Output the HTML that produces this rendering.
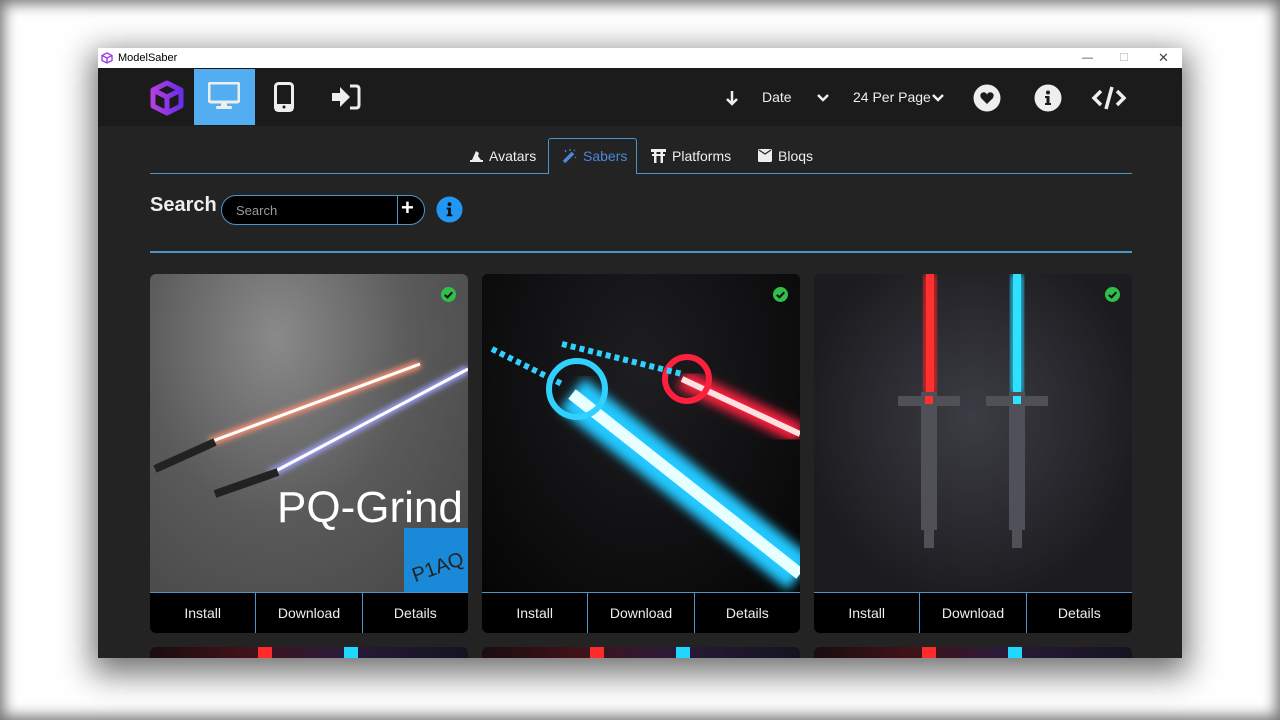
<!DOCTYPE html>
<html><head><meta charset="utf-8"><style>
*{box-sizing:border-box;margin:0;padding:0}
html,body{width:1280px;height:720px;overflow:hidden;background:#fff;font-family:"Liberation Sans",sans-serif}
body{position:relative;box-shadow:inset 0 0 14px 4px rgba(0,0,0,.55)}
.win{position:absolute;left:98px;top:48px;width:1084px;height:610px;background:#232323;overflow:hidden;box-shadow:0 10px 30px 6px rgba(0,0,0,.55)}
.title{height:20px;background:#fff;position:relative;font-size:11px;color:#000;line-height:20px;padding-left:20px}
.title svg{position:absolute;left:3px;top:4px}
.ctl{position:absolute;top:0;font-size:11px;color:#444}
.nav{height:58px;background:#1b1b1b;position:relative}
.nav .act{position:absolute;left:96px;top:1px;width:61px;height:56px;background:#52aef0}
.n{position:absolute;color:#eee;font-size:14px}
.tabs{position:absolute;left:52px;top:105px;width:982px;height:1px;background:#4a95c9}
.tab{position:absolute;top:88px;font-size:14px;color:#eee}
.sab{position:absolute;left:450px;top:90px;width:89px;height:36px;border:1px solid #4a95c9;border-bottom:none;background:#232323;border-radius:3px 3px 0 0}
.card{position:absolute;top:226px;width:318px;height:359px;background:#000;border-radius:6px;overflow:hidden}
.img{position:absolute;left:0;top:0;width:318px;height:318px}
.bar{position:absolute;top:318px;left:0;width:318px;height:41px;border-top:1px solid #4a95c9;display:flex}
.bar div{flex:1;text-align:center;line-height:40px;color:#eee;font-size:14px;border-left:1px solid #4a95c9}
.bar div:first-child{border-left:none}
.chk{position:absolute;right:12px;top:13px;width:15px;height:15px}
.card2{position:absolute;top:599px;width:318px;height:30px;border-radius:6px;overflow:hidden;background:linear-gradient(90deg,#1a0d10 0%,#401218 30%,#2a1a3a 60%,#141420 100%)}
</style></head><body>
<div class="win">
 <div class="title"><svg width="12" height="12" viewBox="0 0 12 12"><path d="M6 1L11 3.5V8.5L6 11L1 8.5V3.5Z M1 3.5L6 6L11 3.5 M6 6V11" fill="none" stroke="#9b3bea" stroke-width="1.4"/></svg>ModelSaber
  <span class="ctl" style="left:984px">—</span><span class="ctl" style="left:1021px;color:#bbb">☐</span><span class="ctl" style="left:1060px;font-size:13px">✕</span></div>
 <div class="nav">
  <svg style="position:absolute;left:52px;top:12px" width="34" height="36" viewBox="0 0 34 36"><defs><linearGradient id="g" x1="0" x2="1"><stop offset="0" stop-color="#b43ee0"/><stop offset="1" stop-color="#6a2ee8"/></linearGradient></defs><path d="M17 3L31 10V26L17 33L3 26V10Z M3 10L17 17L31 10 M17 17V33" fill="none" stroke="url(#g)" stroke-width="5" stroke-linejoin="round"/></svg>
  <div class="act"></div>
  <svg style="position:absolute;left:110px;top:14px" width="32" height="28" viewBox="0 0 32 28"><rect x="1" y="1" width="30" height="19" rx="2" fill="none" stroke="#eee" stroke-width="3"/><rect x="13" y="20" width="6" height="5" fill="#eee"/><rect x="8" y="24" width="16" height="3" rx="1" fill="#eee"/></svg>
  <svg style="position:absolute;left:176px;top:14px" width="20" height="30" viewBox="0 0 20 30"><rect x="1.5" y="1.5" width="17" height="27" rx="3" fill="none" stroke="#eee" stroke-width="3"/><rect x="1" y="22" width="18" height="7" fill="#eee"/><circle cx="10" cy="25" r="1.5" fill="#1b1b1b"/></svg>
  <svg style="position:absolute;left:233px;top:16px" width="30" height="26" viewBox="0 0 30 26"><path d="M1 9H9V3L19 13L9 23V17H1Z" fill="#eee"/><path d="M19 2H25Q28 2 28 5V21Q28 24 25 24H19" fill="none" stroke="#eee" stroke-width="3"/></svg>
  <svg style="position:absolute;left:627px;top:22px" width="14" height="16" viewBox="0 0 14 16"><path d="M7 1V14M2 9L7 14L12 9" fill="none" stroke="#eee" stroke-width="2.5"/></svg>
  <span class="n" style="left:664px;top:21px">Date</span>
  <svg style="position:absolute;left:719px;top:25px" width="12" height="9" viewBox="0 0 12 9"><path d="M1 2L6 7L11 2" fill="none" stroke="#eee" stroke-width="2.5"/></svg>
  <span class="n" style="left:755px;top:21px">24 Per Page</span>
  <svg style="position:absolute;left:834px;top:25px" width="12" height="9" viewBox="0 0 12 9"><path d="M1 2L6 7L11 2" fill="none" stroke="#eee" stroke-width="2.5"/></svg>
  <svg style="position:absolute;left:875px;top:16px" width="28" height="28" viewBox="0 0 28 28"><circle cx="14" cy="14" r="13.5" fill="#eee"/><path d="M14 20L8 14Q6 10 9.5 8.5Q12.5 7.5 14 10.5Q15.5 7.5 18.5 8.5Q22 10 20 14Z" fill="#1b1b1b"/></svg>
  <svg style="position:absolute;left:936px;top:16px" width="28" height="28" viewBox="0 0 28 28"><circle cx="14" cy="14" r="13.5" fill="#eee"/><circle cx="14" cy="8.5" r="2" fill="#1b1b1b"/><path d="M11 12H15.5V19H17V21H11V19H12.5V14H11Z" fill="#1b1b1b"/></svg>
  <svg style="position:absolute;left:993px;top:17px" width="36" height="26" viewBox="0 0 36 26"><path d="M10 6L3 13L10 20M26 6L33 13L26 20M21 2L15 24" fill="none" stroke="#eee" stroke-width="3.5"/></svg>
 </div>
 <div class="sab"></div>
 <div class="tabs" style="top:125px"></div>
 <div style="position:absolute;left:451px;top:125px;width:87px;height:2px;background:#232323"></div>
 <svg style="position:absolute;left:372px;top:101px" width="13" height="13" viewBox="0 0 13 13"><path d="M2 11L6 2L9 4L8 7L11 11Z" fill="#eee"/><rect x="0" y="11" width="13" height="2" fill="#eee"/></svg>
 <span class="tab" style="left:391px;top:100px">Avatars</span>
 <svg style="position:absolute;left:464px;top:101px" width="15" height="14" viewBox="0 0 15 14"><path d="M2 13L11 4" stroke="#4a88d8" stroke-width="3.5"/><path d="M3 1L4 3M12 1L13 2M13 8L14 9M8 0V2" stroke="#4a88d8" stroke-width="1.2"/></svg>
 <span class="tab" style="left:485px;top:100px;color:#4a88d8">Sabers</span>
 <svg style="position:absolute;left:553px;top:101px" width="15" height="14" viewBox="0 0 15 14"><path d="M0 0H15V3H0Z M1 5H14V7H1Z M3 3H5.5V14H3Z M9.5 3H12V14H9.5Z" fill="#eee"/></svg>
 <span class="tab" style="left:574px;top:100px">Platforms</span>
 <svg style="position:absolute;left:660px;top:101px" width="14" height="13" viewBox="0 0 14 13"><rect width="14" height="13" rx="1.5" fill="#eee"/><path d="M1 1L7 5L13 1" fill="none" stroke="#232323" stroke-width="1.2"/></svg>
 <span class="tab" style="left:680px;top:100px">Bloqs</span>
 <div style="position:absolute;left:52px;top:146px;color:#eee;font-size:20px;font-weight:bold">Search</div>
 <div style="position:absolute;left:123px;top:147px;width:204px;height:30px;border:1px solid #4a95c9;border-radius:15px;background:#000"></div>
 <div style="position:absolute;left:299px;top:147px;width:1px;height:30px;background:#4a95c9"></div>
 <span style="position:absolute;left:138px;top:155px;color:#999;font-size:13px">Search</span>
 <span style="position:absolute;left:303px;top:147px;color:#fff;font-size:22px;font-weight:bold">+</span>
 <svg style="position:absolute;left:338px;top:148px" width="27" height="27" viewBox="0 0 28 28"><circle cx="14" cy="14" r="13.5" fill="#2196f3"/><circle cx="14" cy="8.5" r="2" fill="#111"/><path d="M11 12H15.5V19H17V21H11V19H12.5V14H11Z" fill="#111"/></svg>
 <div style="position:absolute;left:52px;top:203px;width:982px;height:2px;background:#4a95c9"></div>

 <div class="card" style="left:52px"><div class="img" style="background:radial-gradient(ellipse at 40% 20%,#8a8a8a,#5a5a5a 50%,#444 100%)">
  <svg width="318" height="318"><defs><filter id="b1"><feGaussianBlur stdDeviation="3"/></filter></defs>
  <path d="M60 168L270 90" stroke="#ff9070" stroke-width="8" filter="url(#b1)"/><path d="M60 168L270 90" stroke="#fff" stroke-width="3"/>
  <path d="M120 200L318 95" stroke="#a0a0ff" stroke-width="8" filter="url(#b1)"/><path d="M120 200L318 95" stroke="#fff" stroke-width="3"/>
  <path d="M5 195L65 168" stroke="#222" stroke-width="8"/><path d="M65 220L128 198" stroke="#222" stroke-width="8"/>
  <text x="127" y="248" font-family="Liberation Sans" font-size="44" fill="#fff">PQ-Grind</text>
  <rect x="254" y="254" width="64" height="64" fill="#1a8ad8"/><text x="260" y="300" font-size="20" fill="#222" font-family="Liberation Sans" transform="rotate(-20 286 290)">P1AQ</text></svg>
  <svg class="chk" viewBox="0 0 16 16"><circle cx="8" cy="8" r="8" fill="#2fbf4a"/><path d="M4 8.5L7 11L12 5.5" fill="none" stroke="#111" stroke-width="2.2"/></svg></div>
  <div class="bar"><div>Install</div><div>Download</div><div>Details</div></div></div>

 <div class="card" style="left:384px"><div class="img" style="background:radial-gradient(ellipse at 50% 30%,#1e1e22,#050505)">
  <svg width="318" height="318"><defs><filter id="b2"><feGaussianBlur stdDeviation="5"/></filter></defs>
  <path d="M90 120L318 300" stroke="#20c8ff" stroke-width="40" filter="url(#b2)"/><path d="M90 120L318 300" stroke="#e8ffff" stroke-width="12"/>
  <path d="M200 105L318 160" stroke="#ff2040" stroke-width="20" filter="url(#b2)"/><path d="M200 105L318 160" stroke="#ffe0e0" stroke-width="6"/>
  <circle cx="95" cy="115" r="28" fill="none" stroke="#30d0ff" stroke-width="6"/><circle cx="205" cy="105" r="22" fill="none" stroke="#ff2040" stroke-width="6"/>
  <path d="M10 75L80 110M80 70L200 100" stroke="#30d0ff" stroke-width="6" stroke-dasharray="5 4"/></svg>
  <svg class="chk" viewBox="0 0 16 16"><circle cx="8" cy="8" r="8" fill="#2fbf4a"/><path d="M4 8.5L7 11L12 5.5" fill="none" stroke="#111" stroke-width="2.2"/></svg></div>
  <div class="bar"><div>Install</div><div>Download</div><div>Details</div></div></div>

 <div class="card" style="left:716px"><div class="img" style="background:radial-gradient(ellipse at 50% 45%,#3c3c44,#1c1c20 75%)">
  <svg width="318" height="318"><defs><filter id="b3"><feGaussianBlur stdDeviation="4"/></filter></defs>
  <rect x="110" y="0" width="12" height="120" fill="#ff2020" filter="url(#b3)"/><rect x="112" y="0" width="8" height="120" fill="#ff3030"/>
  <rect x="197" y="0" width="12" height="120" fill="#20d0ff" filter="url(#b3)"/><rect x="199" y="0" width="8" height="120" fill="#30e0ff"/>
  <rect x="84" y="122" width="62" height="10" fill="#505058"/><rect x="107" y="118" width="16" height="138" fill="#505058"/><rect x="110" y="256" width="10" height="18" fill="#505058"/><rect x="111" y="122" width="8" height="8" fill="#ff3030"/>
  <rect x="172" y="122" width="62" height="10" fill="#505058"/><rect x="195" y="118" width="16" height="138" fill="#505058"/><rect x="198" y="256" width="10" height="18" fill="#505058"/><rect x="199" y="122" width="8" height="8" fill="#30e0ff"/></svg>
  <svg class="chk" viewBox="0 0 16 16"><circle cx="8" cy="8" r="8" fill="#2fbf4a"/><path d="M4 8.5L7 11L12 5.5" fill="none" stroke="#111" stroke-width="2.2"/></svg></div>
  <div class="bar"><div>Install</div><div>Download</div><div>Details</div></div></div>

 <div class="card2" style="left:52px"><div style="position:absolute;left:108px;width:14px;height:30px;background:#ff2a2a"></div><div style="position:absolute;left:194px;width:14px;height:30px;background:#20d8ff"></div></div>
 <div class="card2" style="left:384px"><div style="position:absolute;left:108px;width:14px;height:30px;background:#ff2a2a"></div><div style="position:absolute;left:194px;width:14px;height:30px;background:#20d8ff"></div></div>
 <div class="card2" style="left:716px"><div style="position:absolute;left:108px;width:14px;height:30px;background:#ff2a2a"></div><div style="position:absolute;left:194px;width:14px;height:30px;background:#20d8ff"></div></div>
</div>
</body></html>
